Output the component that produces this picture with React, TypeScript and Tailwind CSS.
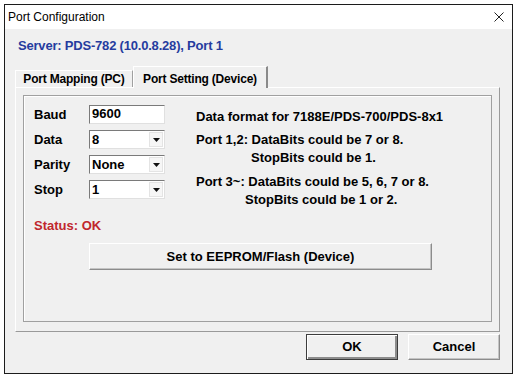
import React from "react";

function Combo({ value }: { value: string }) {
  return (
    <div className="flex h-[19px] w-[76px] border border-t-[#7a7a7a] border-l-[#7a7a7a] border-r-[#e0e0e0] border-b-[#e0e0e0] bg-white">
      <div className="flex-1 pl-[2px] leading-[17px]">{value}</div>
      <div className="m-[1px] flex w-[14px] items-center justify-center border border-[#e4e4e4] bg-[#f6f6f6]">
        <svg width="7" height="4" viewBox="0 0 7 4">
          <path d="M0 0h7L3.5 4z" fill="#111" />
        </svg>
      </div>
    </div>
  );
}

function Field({ label, children }: { label: string; children: React.ReactNode }) {
  return (
    <div className="flex h-[19px] items-center">
      <div className="w-[55px]">{label}</div>
      {children}
    </div>
  );
}

export default function App() {
  return (
    <div className="h-[380px] w-[519px] bg-white pl-[4px] pt-[4px] font-['Liberation_Sans',Arial,sans-serif] text-[13px] font-bold text-black">
      <div className="flex h-[370px] w-[509px] flex-col border border-[#1c1c1c] bg-[#f0f0f0]">
        {/* title bar */}
        <div className="flex h-[24px] items-center justify-between bg-white pl-[3px] pr-[8px] text-[12px] font-normal">
          <span>Port Configuration</span>
          <svg width="10" height="10" viewBox="0 0 10 10">
            <path d="M0.5 0.5l9 9M9.5 0.5l-9 9" stroke="#222" strokeWidth="1" />
          </svg>
        </div>

        <div className="flex flex-1 flex-col pl-[10px] pr-[12px]">
          <div className="pl-[3px] pt-[9px] leading-[15px] tracking-[-0.2px] text-[#263c9f]">Server: PDS-782 (10.0.8.28), Port 1</div>

          {/* tabs */}
          <div className="relative z-10 -mb-px mt-[13px] flex h-[22px] items-end text-[12px] tracking-[-0.2px]">
            <div className="mb-px flex h-[17px] w-[118px] items-center justify-center border-l border-t border-r border-l-white border-t-white border-r-[#a0a0a0]">
              Port Mapping (PC)
            </div>
            <div className="flex h-[22px] w-[135px] items-start justify-center border-l border-t border-r-2 border-l-white border-t-white border-r-[#8a8a8a] bg-[#f0f0f0] pt-[3px]">
              Port Setting (Device)
            </div>
          </div>

          {/* tab panel */}
          <div className="flex h-[245px] flex-col border border-l-white border-t-white border-r-[#9a9a9a] border-b-[#9a9a9a] px-[7px] pb-[9px] pt-[7px]">
            <div className="flex flex-1 flex-col border border-[#a0a0a0] pl-[10px] pt-[9px] shadow-[inset_1px_1px_0_#fff]">
              <div className="flex">
                <div className="flex flex-col gap-[6px]">
                  <Field label="Baud">
                    <div className="h-[19px] w-[76px] border border-t-[#7a7a7a] border-l-[#7a7a7a] border-r-[#e0e0e0] border-b-[#e0e0e0] bg-white pl-[2px] leading-[15px]">
                      9600
                    </div>
                  </Field>
                  <Field label="Data">
                    <Combo value="8" />
                  </Field>
                  <Field label="Parity">
                    <Combo value="None" />
                  </Field>
                  <Field label="Stop">
                    <Combo value="1" />
                  </Field>
                </div>
                <div className="ml-[31px] pt-[3px] leading-[18px]">
                  <div>Data format for 7188E/PDS-700/PDS-8x1</div>
                  <div className="mt-[5px]">Port 1,2: DataBits could be 7 or 8.</div>
                  <div className="pl-[55px]">StopBits could be 1.</div>
                  <div className="mt-[6px]">Port 3~: DataBits could be 5, 6, 7 or 8.</div>
                  <div className="pl-[49px]">StopBits could be 1 or 2.</div>
                </div>
              </div>
              <div className="mt-[9px] leading-[15px] text-[#c0272d]">Status: OK</div>
              <div className="ml-[55px] mt-[10px] flex h-[27px] w-[343px] items-center justify-center border border-l-white border-t-white border-r-[#8c8c8c] border-b-[#8c8c8c] shadow-[inset_-1px_-1px_0_#c4c4c4]">
                Set to EEPROM/Flash (Device)
              </div>
            </div>
          </div>

          {/* dialog buttons */}
          <div className="mt-[2px] flex justify-end gap-[10px]">
            <div className="flex h-[26px] w-[92px] items-center justify-center border border-[#3c3c3c] shadow-[inset_1px_1px_0_#fff,inset_-2px_-2px_0_#8c8c8c]">
              OK
            </div>
            <div className="flex h-[26px] w-[92px] items-center justify-center border border-l-white border-t-white border-r-[#8c8c8c] border-b-[#8c8c8c] shadow-[inset_-1px_-1px_0_#c4c4c4]">
              Cancel
            </div>
          </div>
        </div>
      </div>
    </div>
  );
}
